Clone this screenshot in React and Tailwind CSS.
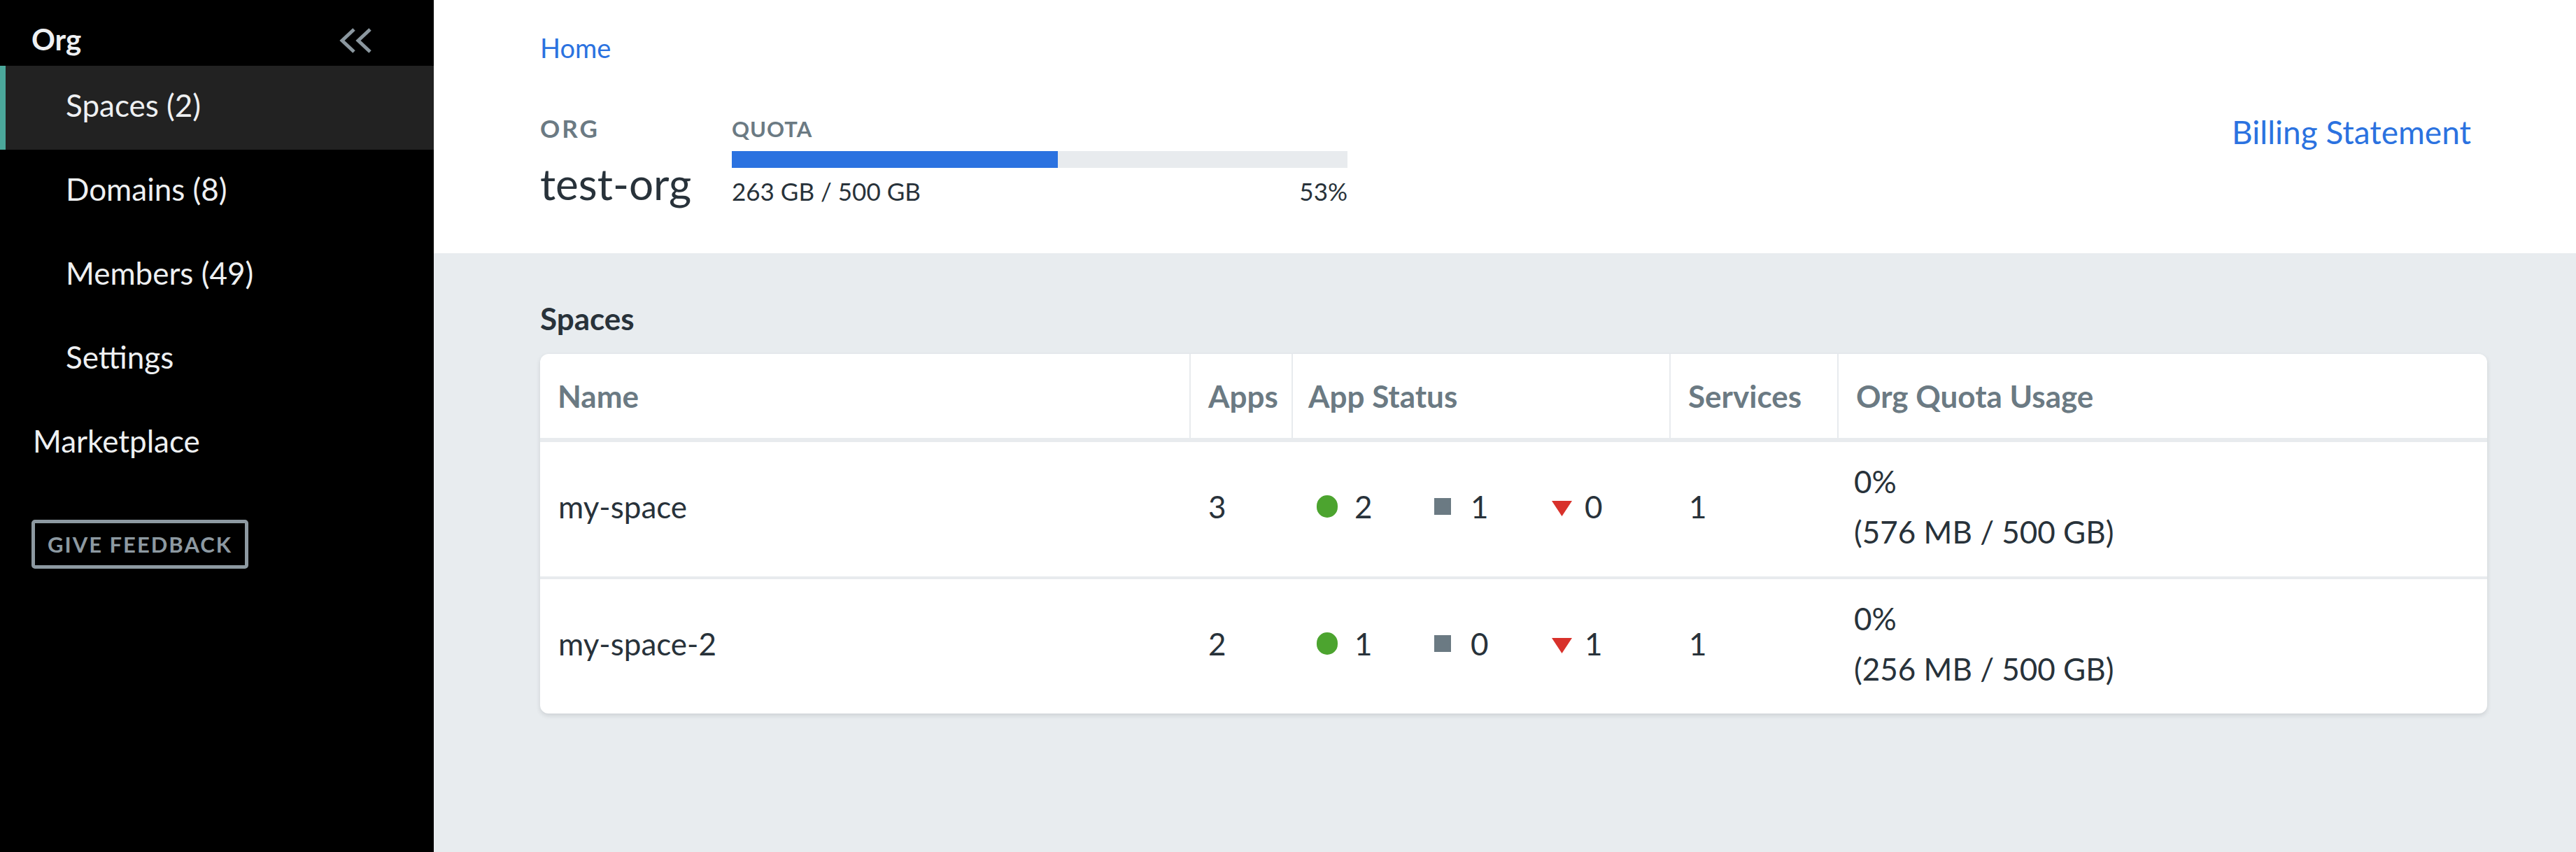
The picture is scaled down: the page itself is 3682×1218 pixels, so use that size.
import React from "react";

const navItems = [
  { label: "Spaces (2)", active: true },
  { label: "Domains (8)" },
  { label: "Members (49)" },
  { label: "Settings" },
];

const spaces = [
  { name: "my-space", apps: 3, running: 2, stopped: 1, crashed: 0, services: 1, pct: "0%", usage: "(576 MB / 500 GB)" },
  { name: "my-space-2", apps: 2, running: 1, stopped: 0, crashed: 1, services: 1, pct: "0%", usage: "(256 MB / 500 GB)" },
];

function Sidebar() {
  return (
    <aside className="w-[620px] shrink-0 bg-black text-[#eef0f2]">
      {/* Header */}
      <div className="flex items-start justify-between h-[94px] pl-[45px] pr-[86px] pt-[35px]">
        <span className="text-[42px] leading-none font-bold">Org</span>
        <svg className="w-[50px] h-[38px] mt-[4px]" viewBox="0 0 50 38" fill="none" stroke="#8b979f" strokeWidth={5}>
          <polyline points="22,3 5,19 22,35" />
          <polyline points="45,3 28,19 45,35" />
        </svg>
      </div>

      {navItems.map((item) =>
        item.active ? (
          <div key={item.label} className="h-[120px] pt-[34px] pl-[86px] border-l-[8px] border-[#4ba89b] bg-[#222222]">
            <span className="text-[44px] leading-none">{item.label}</span>
          </div>
        ) : (
          <div key={item.label} className="h-[120px] pt-[34px] pl-[94px]">
            <span className="text-[44px] leading-none">{item.label}</span>
          </div>
        )
      )}
      <div className="h-[120px] pt-[34px] pl-[47px]">
        <span className="text-[44px] leading-none">Marketplace</span>
      </div>

      <button className="ml-[45px] mt-[49px] w-[310px] h-[70px] flex items-center justify-center border-[5px] border-[#8d99a1] rounded-[5px] text-[31px] leading-none font-bold tracking-[2px] text-[#8d99a1]">
        GIVE FEEDBACK
      </button>
    </aside>
  );
}

function StatusCell({ running, stopped, crashed }) {
  return (
    <div className="flex items-center pl-[34px]">
      <div className="w-[168px] flex items-center">
        <span className="ml-[2px] w-[30px] h-[32px] rounded-full bg-[#4ca42f]" />
        <span className="ml-[24px]">{running}</span>
      </div>
      <div className="w-[168px] flex items-center">
        <span className="ml-[2px] w-[24px] h-[24px] bg-[#6b7a83]" />
        <span className="ml-[28px]">{stopped}</span>
      </div>
      <div className="w-[168px] flex items-center">
        <svg className="ml-[2px] w-[29px] h-[22px] mt-[6px]" viewBox="0 0 29 22">
          <polygon points="0,0 29,0 14.5,22" fill="#d8312b" />
        </svg>
        <span className="ml-[18px]">{crashed}</span>
      </div>
    </div>
  );
}

export default function App() {
  return (
    <div className="flex min-h-screen font-['Lato',sans-serif]">
      <Sidebar />

      <main className="flex-1 bg-[#e8ecef]">
        {/* Page header */}
        <div className="h-[362px] bg-white pl-[152px] pr-[150px] pt-[49px]">
          <a className="block text-[38px] leading-none text-[#2b72e0]">Home</a>
          <div className="flex items-start mt-[79px]">
            <div className="w-[274px] shrink-0">
              <div className="text-[35px] leading-none font-bold tracking-[3px] text-[#6b7a83]">ORG</div>
              <div className="mt-[30px] text-[62px] leading-none text-[#28323a]">test-org</div>
            </div>
            <div className="w-[880px] shrink-0">
              <div className="mt-[3px] text-[31px] leading-none font-bold tracking-[1px] text-[#6b7a83]">QUOTA</div>
              <div className="mt-[16px] h-[24px] bg-[#e8ebee]">
                <div className="h-full w-[53%] bg-[#2b72e0]" />
              </div>
              <div className="mt-[16px] flex justify-between text-[35px] leading-none text-[#28323a]">
                <span>263 GB / 500 GB</span>
                <span>53%</span>
              </div>
            </div>
            <a className="ml-auto text-[46px] leading-none text-[#2b72e0]">Billing Statement</a>
          </div>
        </div>

        {/* Spaces */}
        <div className="pl-[152px] pr-[127px] pt-[71px] pb-[40px]">
          <h2 className="text-[44px] leading-none font-bold text-[#28323a]">Spaces</h2>
          <div className="mt-[29px] bg-white rounded-[12px] shadow-[0_3px_6px_rgba(40,50,58,0.14)] text-[#28323a]">
            <div className="grid grid-cols-[928px_146px_540px_240px_1fr] h-[126px] border-b-[6px] border-[#e8ebee] text-[44px] leading-none font-bold text-[#6b7a83]">
              <div className="flex items-center pl-[25px]">Name</div>
              <div className="flex items-center pl-[25px] border-l-[2px] border-[#e8ebee]">Apps</div>
              <div className="flex items-center pl-[22px] border-l-[2px] border-[#e8ebee]">App Status</div>
              <div className="flex items-center pl-[25px] border-l-[2px] border-[#e8ebee]">Services</div>
              <div className="flex items-center pl-[25px] border-l-[2px] border-[#e8ebee]">Org Quota Usage</div>
            </div>
            {spaces.map((s, i) => (
              <div
                key={s.name}
                className={`grid grid-cols-[928px_146px_540px_240px_1fr] text-[44px] leading-none ${
                  i < spaces.length - 1 ? "h-[196px] border-b-[4px] border-[#e8ebee] pb-[8px]" : "h-[192px] pb-[8px]"
                }`}
              >
                <div className="flex items-center pl-[26px]">{s.name}</div>
                <div className="flex items-center pl-[27px]">{s.apps}</div>
                <StatusCell running={s.running} stopped={s.stopped} crashed={s.crashed} />
                <div className="flex items-center pl-[28px]">{s.services}</div>
                <div className="flex flex-col justify-center pl-[24px] leading-[72px]">
                  <span>{s.pct}</span>
                  <span>{s.usage}</span>
                </div>
              </div>
            ))}
          </div>
        </div>
      </main>
    </div>
  );
}
